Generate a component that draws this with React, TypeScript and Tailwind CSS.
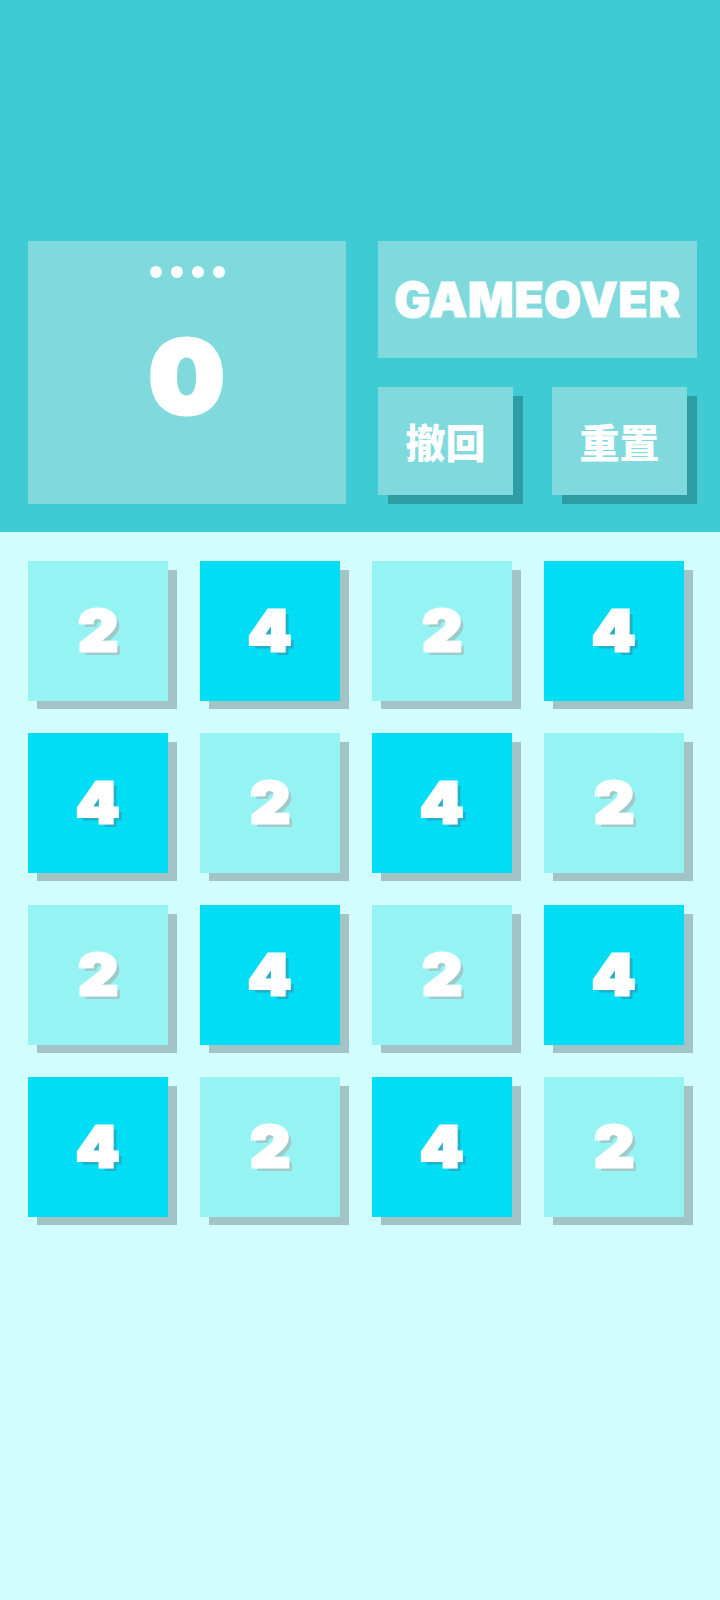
import React from "react";

const board = [
  [2, 4, 2, 4],
  [4, 2, 4, 2],
  [2, 4, 2, 4],
  [4, 2, 4, 2],
];

function Tile({ v }: { v: number }) {
  const dark = v === 4;
  return (
    <div className="relative w-[140px] h-[140px]">
      <div className="absolute left-[9px] top-[9px] w-[140px] h-[139px] bg-[#a3c4c6]" />
      <div
        className={
          "relative w-[140px] h-[140px] flex items-center justify-center " +
          (dark ? "bg-[#00ddf4]" : "bg-[#96f3f3]")
        }
      >
        <span
          className={
            "text-white font-black text-[56px] leading-none scale-x-[1.1] [-webkit-text-stroke:3px_white] " +
            (dark
              ? "[text-shadow:4px_4px_0_#22b0c9]"
              : "[text-shadow:4px_4px_0_#9fcaca]")
          }
          style={{ fontFamily: "Inter, 'Noto Sans', sans-serif" }}
        >
          {v}
        </span>
      </div>
    </div>
  );
}

function ActionButton({ label }: { label: string }) {
  return (
    <div className="relative w-[135px] h-[108px]">
      <div className="absolute left-[10px] top-[9px] w-[135px] h-[108px] bg-[#2e9ca3]" />
      <div className="relative w-[135px] h-[108px] bg-[#80dadd] flex items-center justify-center">
        <span
          className="text-white font-black text-[40px] leading-none"
          style={{ fontFamily: "'Noto Sans CJK SC', 'Noto Sans CJK TC', sans-serif" }}
        >
          {label}
        </span>
      </div>
    </div>
  );
}

export default function App() {
  return (
    <div className="w-[720px] min-h-[1600px] bg-[#d2fdfd]" style={{ fontFamily: "Inter, sans-serif" }}>
      <div className="h-[532px] bg-[#3fcbd3] pt-[241px] pl-[28px] flex gap-[32px]">
        <div className="w-[318px] h-[263px] bg-[#80dadd] flex flex-col items-center pt-[25px]">
          <div className="flex gap-[9px]">
            <div className="w-[12px] h-[12px] rounded-full bg-white" />
            <div className="w-[12px] h-[12px] rounded-full bg-white" />
            <div className="w-[12px] h-[12px] rounded-full bg-white" />
            <div className="w-[12px] h-[12px] rounded-full bg-white" />
          </div>
          <div className="mt-[49px] text-white font-black text-[100px] leading-[100px] scale-x-[1.05] [-webkit-text-stroke:5px_white]">
            0
          </div>
        </div>
        <div className="flex flex-col w-[319px]">
          <div className="h-[117px] bg-[#80dadd] flex items-center justify-center">
            <span className="text-white font-black text-[48px] leading-none tracking-[0.5px] [-webkit-text-stroke:1px_white]">
              GAMEOVER
            </span>
          </div>
          <div className="flex gap-[39px] mt-[29px]">
            <ActionButton label="撤回" />
            <ActionButton label="重置" />
          </div>
        </div>
      </div>
      <div className="pt-[29px] pl-[28px] flex flex-col gap-[32px]">
        {board.map((row, i) => (
          <div key={i} className="flex gap-[32px]">
            {row.map((v, j) => (
              <Tile key={j} v={v} />
            ))}
          </div>
        ))}
      </div>
    </div>
  );
}
